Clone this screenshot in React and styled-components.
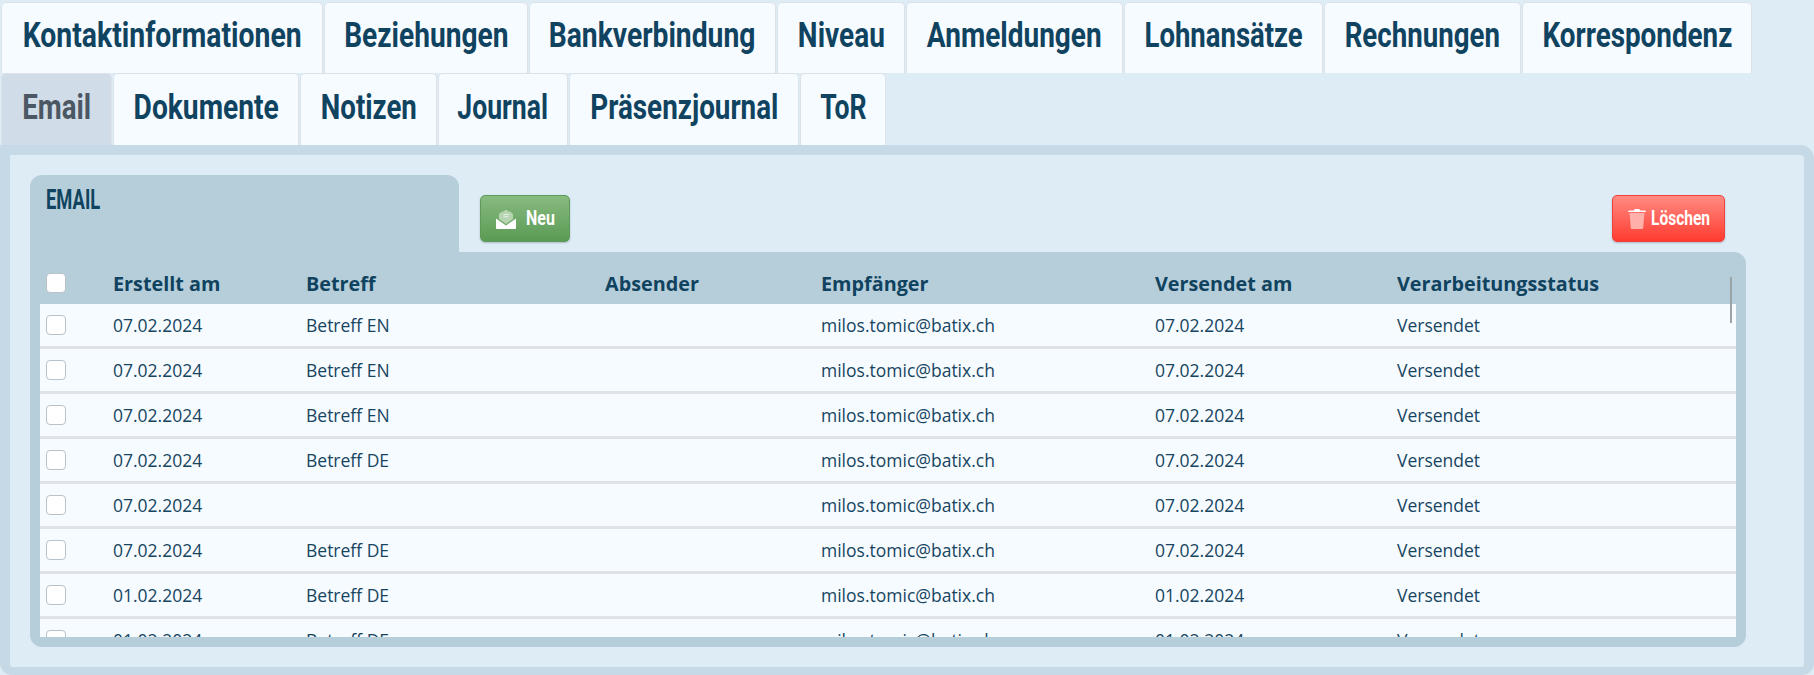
import React from 'react';
import styled, { createGlobalStyle } from 'styled-components';

const GlobalStyle = createGlobalStyle`
  html, body {
    margin: 0;
    padding: 0;
    background: #deecf5;
    overflow: hidden;
  }
  body {
    font-family: "Open Sans", "Noto Sans", sans-serif;
    color: #17455f;
  }
`;

const HEAD_FONT = 'Roboto, "Liberation Sans", sans-serif';

const TABS = [
  [
    { title: 'Kontaktinformationen', width: 322, squeeze: 0.81 },
    { title: 'Beziehungen', width: 204, squeeze: 0.803 },
    { title: 'Bankverbindung', width: 247, squeeze: 0.807 },
    { title: 'Niveau', width: 128, squeeze: 0.8 },
    { title: 'Anmeldungen', width: 217, squeeze: 0.8 },
    { title: 'Lohnansätze', width: 199, squeeze: 0.786 },
    { title: 'Rechnungen', width: 197, squeeze: 0.79 },
    { title: 'Korrespondenz', width: 230, squeeze: 0.795 },
  ],
  [
    { title: 'Email', width: 111, squeeze: 0.79, active: true },
    { title: 'Dokumente', width: 186, squeeze: 0.805 },
    { title: 'Notizen', width: 137, squeeze: 0.79 },
    { title: 'Journal', width: 130, squeeze: 0.76 },
    { title: 'Präsenzjournal', width: 230, squeeze: 0.795 },
    { title: 'ToR', width: 86, squeeze: 0.76 },
  ],
];

const MAIL = 'milos.tomic@batix.ch';
const ROWS = [
  ['07.02.2024', 'Betreff EN'],
  ['07.02.2024', 'Betreff EN'],
  ['07.02.2024', 'Betreff EN'],
  ['07.02.2024', 'Betreff DE'],
  ['07.02.2024', ''],
  ['07.02.2024', 'Betreff DE'],
  ['01.02.2024', 'Betreff DE'],
  ['01.02.2024', 'Betreff DE'],
];

const Page = styled.div`
  display: flex;
  flex-direction: column;
  height: 675px;
  width: 1814px;
  overflow: hidden;
`;

const TabBar = styled.nav`
  display: flex;
  flex-direction: column;
  padding: 2px 0 0 1px;
`;

const TabRow = styled.div`
  display: flex;
  gap: 1px;
  height: ${p => p.$height}px;
`;

const Tab = styled.div`
  display: flex;
  align-items: center;
  justify-content: center;
  flex: none;
  width: ${p => p.$width}px;
  padding-bottom: 5px;
  background: ${p => (p.$active ? '#d0dde8' : '#f6fbff')};
  border: 1px solid #dde2e8;
  border-bottom: 0;
  border-radius: 5px 5px 0 0;
  box-sizing: border-box;
  color: ${p => (p.$active ? '#4b5763' : '#10435f')};
`;

const TabLabel = styled.span`
  flex: none;
  font-family: ${HEAD_FONT};
  font-weight: 700;
  font-size: 35px;
  line-height: 1;
  white-space: nowrap;
  transform: scaleX(${p => p.$squeeze});
`;

const Panel = styled.section`
  flex: 1;
  border: 10px solid #c6d9e6;
  border-bottom-width: 8px;
  border-radius: 0 14px 12px 12px;
  box-sizing: border-box;
  background: #deecf5;
  padding: 20px 0 0 20px;
`;

const Toolbar = styled.div`
  display: flex;
  align-items: flex-start;
  width: 1716px;
  height: 77px;
`;

const LegendTab = styled.div`
  width: 429px;
  height: 77px;
  box-sizing: border-box;
  padding: 11px 16px;
  background: #b6ceda;
  border-radius: 12px 12px 0 0;
`;

const LegendTitle = styled.span`
  display: inline-block;
  font-family: ${HEAD_FONT};
  font-weight: 700;
  font-size: 27px;
  line-height: 28px;
  color: #10435f;
  transform: scaleX(0.68);
  transform-origin: left center;
`;

const ActionButton = styled.button`
  display: flex;
  align-items: center;
  gap: ${p => p.$gap}px;
  height: 47px;
  width: ${p => p.$width}px;
  margin: 20px ${p => p.$right || 0}px 0 ${p => p.$left};
  padding: 0 0 0 ${p => p.$pad}px;
  box-sizing: border-box;
  border-radius: 5px;
  border: 1px solid ${p => p.$edge};
  background: linear-gradient(${p => p.$from}, ${p => p.$to});
  box-shadow: 0 1px 2px rgba(40, 70, 90, 0.3);
  color: #fff;
`;

const ButtonLabel = styled.span`
  flex: none;
  font-family: ${HEAD_FONT};
  font-weight: 700;
  font-size: 21px;
  line-height: 1;
  transform: scaleX(${p => p.$squeeze});
  transform-origin: left center;
  width: ${p => p.$width}px;
`;

const TableBox = styled.div`
  position: relative;
  width: 1716px;
  height: 395px;
  box-sizing: border-box;
  padding: 0 10px 10px;
  background: #b6ceda;
  border-radius: 0 12px 12px 12px;
  display: flex;
  flex-direction: column;
`;

const Columns = styled.div`
  display: grid;
  grid-template-columns: 73px 193px 299px 216px 334px 242px 1fr;
  align-items: center;
`;

const HeadRow = styled(Columns)`
  height: 52px;
  flex: none;
  padding-top: 10px;
  box-sizing: border-box;
  font-weight: 700;
  font-size: 19.8px;
  color: #10435f;
`;

const Body = styled.div`
  flex: 1;
  overflow: hidden;
`;

const Row = styled(Columns)`
  height: 45px;
  box-sizing: border-box;
  background: #f6fbff;
  border-bottom: 3px solid #dfe3e9;
  font-size: 17.5px;
  color: #17455f;
`;

const Box = styled.span`
  display: block;
  width: 20px;
  height: 20px;
  margin-left: 6px;
  box-sizing: border-box;
  background: #fff;
  border: 1px solid #b9c1c9;
  border-radius: 4px;
`;

const ScrollThumb = styled.div`
  position: absolute;
  top: 25px;
  right: 14px;
  width: 2px;
  height: 46px;
  background: #9aa3a8;
`;

const MailIcon = () => (
  <svg width="20" height="20" viewBox="0 0 20 20">
    <path d="M3 10 V5 L6 2.4 L8 2.4 L9 1 H11 L12 2.4 L14 2.4 L17 5 V10 L10 15 Z" fill="#b7d5b0" />
    <path d="M7.4 5.6 H12.6 M7.4 7.8 H12.6" stroke="#e6f2e3" strokeWidth="1" />
    <path d="M0 9.4 L10 16.4 L20 9.4 V19 Q20 20 19 20 H1 Q0 20 0 19 Z" fill="#fff" />
  </svg>
);

const TrashIcon = () => (
  <svg width="18" height="20" viewBox="0 0 18 20">
    <path d="M1.6 4 H16.4 L15.2 19 Q15.1 20 14.2 20 H3.8 Q2.9 20 2.8 19 Z" fill="#ffb0aa" />
    <path d="M0 3 Q0 1.6 1.6 1.6 H5.8 Q6 0 7.2 0 H10.8 Q12 0 12.2 1.6 H16.4 Q18 1.6 18 3 Z" fill="#fff" />
  </svg>
);

export default function App() {
  return (
    <Page>
      <GlobalStyle />
      <TabBar>
        {TABS.map((row, i) => (
          <TabRow key={i} $height={i === 0 ? 71 : 72}>
            {row.map(tab => (
              <Tab key={tab.title} $width={tab.width} $active={tab.active}>
                <TabLabel $squeeze={tab.squeeze}>{tab.title}</TabLabel>
              </Tab>
            ))}
          </TabRow>
        ))}
      </TabBar>
      <Panel>
        <Toolbar>
          <LegendTab>
            <LegendTitle>EMAIL</LegendTitle>
          </LegendTab>
          <ActionButton $width={90} $left="21px" $pad={15} $gap={10} $edge="#5d9a58" $from="#88bb80" $to="#5a9a54">
            <MailIcon />
            <ButtonLabel $squeeze={0.76} $width={28}>Neu</ButtonLabel>
          </ActionButton>
          <ActionButton $width={113} $left="auto" $right={21} $pad={15} $gap={5} $edge="#f0413a" $from="#ff8b82" $to="#ff3b30">
            <TrashIcon />
            <ButtonLabel $squeeze={0.74} $width={57}>Löschen</ButtonLabel>
          </ActionButton>
        </Toolbar>
        <TableBox>
          <HeadRow>
            <Box />
            <span>Erstellt am</span>
            <span>Betreff</span>
            <span>Absender</span>
            <span>Empfänger</span>
            <span>Versendet am</span>
            <span>Verarbeitungsstatus</span>
          </HeadRow>
          <Body>
            {ROWS.map(([date, subject], i) => (
              <Row key={i}>
                <Box />
                <span>{date}</span>
                <span>{subject}</span>
                <span />
                <span>{MAIL}</span>
                <span>{date}</span>
                <span>Versendet</span>
              </Row>
            ))}
          </Body>
          <ScrollThumb />
        </TableBox>
      </Panel>
    </Page>
  );
}
